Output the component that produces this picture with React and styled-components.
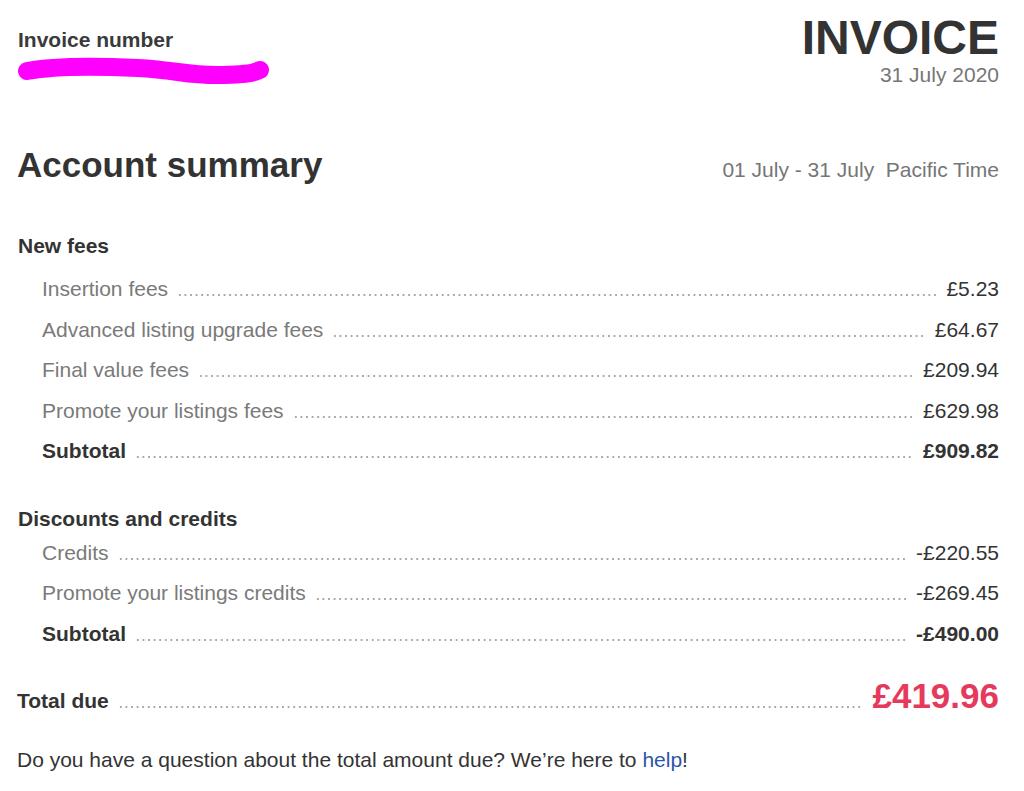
import React from 'react';
import styled, {createGlobalStyle} from 'styled-components';

const GlobalStyle = createGlobalStyle`
    html, body {
        margin: 0;
        padding: 0;
        background: #fff;
    }
    body {
        font-family: "Liberation Sans", Arial, sans-serif;
        color: #333;
    }
`;

const Page = styled.main`
    width: 1024px;
    box-sizing: border-box;
    padding: 14px 25px 20px 17px;
`;

const Header = styled.header`
    display: flex;
    justify-content: space-between;
    align-items: flex-start;
`;

const NumberBlock = styled.div`
    margin-top: 14px;
    padding-left: 1px;
`;

const Label = styled.div`
    font-size: 21px;
    line-height: 24px;
    font-weight: bold;
    color: #3a3a3a;
`;

const Redaction = styled.svg`
    display: block;
    margin-top: 5px;
    width: 252px;
    height: 32px;
`;

const TitleBlock = styled.div`
    text-align: right;
`;

const Title = styled.h1`
    margin: 0;
    font-size: 48px;
    line-height: 48px;
    font-weight: bold;
    color: #333;
`;

const Muted = styled.div`
    margin-top: 1px;
    font-size: 21px;
    line-height: 24px;
    color: #767676;
`;

const SummaryHead = styled.div`
    margin-top: 56px;
    display: flex;
    justify-content: space-between;
    align-items: baseline;
`;

const Heading = styled.h2`
    margin: 0;
    font-size: 35px;
    line-height: 40px;
    font-weight: bold;
    color: #333;
`;

const Period = styled.div`
    font-size: 21px;
    line-height: 24px;
    color: #767676;
    white-space: pre;
`;

const Section = styled.section`
    margin-top: ${p => p.$gap}px;
`;

const SectionTitle = styled.h3`
    margin: 0 0 ${p => p.$after}px;
    padding-left: 1px;
    font-size: 21px;
    line-height: 24px;
    font-weight: bold;
    color: #333;
`;

const Row = styled.div`
    display: flex;
    align-items: baseline;
    padding-left: ${p => (p.$total ? 0 : 25)}px;
    font-size: 21px;
    line-height: ${p => (p.$total ? 40 : 40.5)}px;
    margin-top: ${p => (p.$total ? 22 : 0)}px;
`;

const RowLabel = styled.span`
    color: ${p => (p.$strong ? '#333' : '#7a7a7a')};
    font-weight: ${p => (p.$strong ? 'bold' : 'normal')};
    white-space: nowrap;
`;

const Leader = styled.span`
    flex: 1;
    align-self: baseline;
    height: 2px;
    margin: 0 9px 1px;
    background-image: radial-gradient(circle, #a8a8a8 0.9px, transparent 1px);
    background-size: 5.6px 2px;
    background-repeat: repeat-x;
`;

const Amount = styled.span`
    white-space: nowrap;
    color: ${p => (p.$total ? '#e63a5c' : '#333')};
    font-weight: ${p => (p.$strong ? 'bold' : 'normal')};
    font-size: ${p => (p.$total ? 35 : 21)}px;
`;

const Footer = styled.p`
    margin: 27px 0 0;
    font-size: 21px;
    line-height: 24px;
    color: #333;
`;

const Link = styled.a`
    color: #2d55a8;
    text-decoration: none;
`;

const sections = [
    {
        title: 'New fees',
        gap: 49,
        after: 11,
        rows: [
            ['Insertion fees', '£5.23'],
            ['Advanced listing upgrade fees', '£64.67'],
            ['Final value fees', '£209.94'],
            ['Promote your listings fees', '£629.98'],
        ],
        subtotal: '£909.82',
    },
    {
        title: 'Discounts and credits',
        gap: 35,
        after: 2,
        rows: [
            ['Credits', '-£220.55'],
            ['Promote your listings credits', '-£269.45'],
        ],
        subtotal: '-£490.00',
    },
];

export default function App() {
    return (
        <>
            <GlobalStyle />
            <Page>
                <Header>
                    <NumberBlock>
                        <Label>Invoice number</Label>
                        <Redaction viewBox="0 0 252 32">
                            <path
                                d="M9 14 C 40 8, 80 9, 120 11 S 170 19, 205 18 S 238 14, 242 13"
                                stroke="#ff00ff"
                                strokeWidth="18"
                                strokeLinecap="round"
                                fill="none"
                            />
                        </Redaction>
                    </NumberBlock>
                    <TitleBlock>
                        <Title>INVOICE</Title>
                        <Muted>31 July 2020</Muted>
                    </TitleBlock>
                </Header>

                <SummaryHead>
                    <Heading>Account summary</Heading>
                    <Period>{'01 July - 31 July  Pacific Time'}</Period>
                </SummaryHead>

                {sections.map(s => (
                    <Section key={s.title} $gap={s.gap}>
                        <SectionTitle $after={s.after}>{s.title}</SectionTitle>
                        {s.rows.map(([label, amount]) => (
                            <Row key={label}>
                                <RowLabel>{label}</RowLabel>
                                <Leader />
                                <Amount>{amount}</Amount>
                            </Row>
                        ))}
                        <Row>
                            <RowLabel $strong>Subtotal</RowLabel>
                            <Leader />
                            <Amount $strong>{s.subtotal}</Amount>
                        </Row>
                    </Section>
                ))}

                <Row $total>
                    <RowLabel $strong>Total due</RowLabel>
                    <Leader />
                    <Amount $strong $total>£419.96</Amount>
                </Row>

                <Footer>
                    Do you have a question about the total amount due? We’re here to <Link href="#">help</Link>!
                </Footer>
            </Page>
        </>
    );
}
